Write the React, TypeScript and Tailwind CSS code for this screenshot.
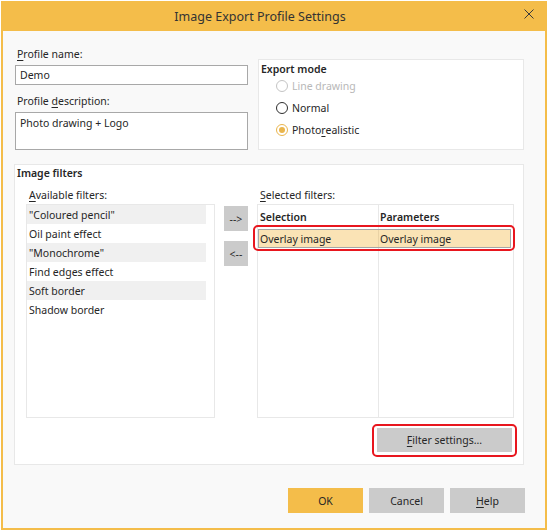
import React from "react";

const U = ({ children }: { children: React.ReactNode }) => (
  <span className="underline underline-offset-[2px] decoration-[1px]">{children}</span>
);

function Radio({ label, state }: { label: React.ReactNode; state: "disabled" | "off" | "on" }) {
  return (
    <div className="flex items-center h-[20px]">
      <div
        className={
          "w-[12px] h-[12px] rounded-full border flex items-center justify-center bg-white " +
          (state === "disabled"
            ? "border-[#c4c4c4]"
            : state === "on"
            ? "border-[#eab54c]"
            : "border-[#2e2e2e]")
        }
      >
        {state === "on" && <div className="w-[6px] h-[6px] rounded-full bg-[#eab54c]" />}
      </div>
      <span className={"ml-[4px] " + (state === "disabled" ? "text-[#b8b8b8]" : "text-[#262626]")}>{label}</span>
    </div>
  );
}

export default function App() {
  const filters = [
    '"Coloured pencil"',
    "Oil paint effect",
    '"Monochrome"',
    "Find edges effect",
    "Soft border",
    "Shadow border",
  ];
  return (
    <div
      className="w-[549px] h-[531px] bg-white pt-px pl-px text-[10.5px] leading-[14px] text-[#262626]"
      style={{ fontFamily: '"Noto Sans", "Liberation Sans", sans-serif' }}
    >
      <div className="w-[546px] h-[529px] border-2 border-[#f4bd4a] bg-[#f9f9f9] flex flex-col">
        {/* Title bar */}
        <div className="h-[28px] bg-[#f4bd4a] flex shrink-0">
          <div className="flex-1 flex items-center justify-center text-[12.5px] text-[#333]">
            Image Export Profile Settings
          </div>
          <div className="w-[28px] pl-[7px] pt-[6px]">
            <svg width="10" height="10" viewBox="0 0 10 10">
              <path d="M0.5 0.5 L9.5 9.5 M9.5 0.5 L0.5 9.5" stroke="#3a3a3a" strokeWidth="1" fill="none" />
            </svg>
          </div>
        </div>

        {/* Body */}
        <div className="flex-1 flex flex-col">
          {/* Top row */}
          <div className="flex pt-[16px] pl-[12px]">
            <div className="w-[233px] flex flex-col">
              <div className="h-[14px] pl-[2px]">
                <U>P</U>rofile name:
              </div>
              <div className="mt-[4px] h-[20px] border border-[#a8a8a8] bg-white flex items-center px-[4px]">
                Demo
              </div>
              <div className="mt-[9px] h-[14px] pl-[2px]">
                Profile <U>d</U>escription:
              </div>
              <div className="mt-[4px] h-[38px] border border-[#a8a8a8] bg-white px-[4px] pt-[3px]">
                Photo drawing + Logo
              </div>
            </div>
            <div className="ml-[10px] mt-[12px] w-[266px] h-[91px] border border-[#e8e8e8] bg-white pl-[2px] pt-[2px]">
              <div className="h-[14px] font-semibold">Export mode</div>
              <div className="ml-[15px] flex flex-col gap-[2px]">
                <Radio label="Line drawing" state="disabled" />
                <Radio label="Normal" state="off" />
                <Radio
                  label={
                    <>
                      Photo<U>r</U>ealistic
                    </>
                  }
                  state="on"
                />
              </div>
            </div>
          </div>

          {/* Image filters */}
          <div className="ml-[11px] mt-[14px] w-[510px] h-[301px] border border-[#e8e8e8] bg-white flex flex-col">
            <div className="h-[14px] pl-[2px] pt-px font-semibold">Image filters</div>
            <div className="flex mt-[9px]">
              <div className="ml-[11px] w-[189px] flex flex-col">
                <div className="h-[14px] pl-[3px]">
                  <U>A</U>vailable filters:
                </div>
                <div className="mt-[2px] h-[214px] border border-[#e8e8e8] bg-white">
                  {filters.map((f, i) => (
                    <div
                      key={f}
                      className={
                        "w-[179px] h-[19px] flex items-center pl-[2px] " + (i % 2 === 0 ? "bg-[#f0f0f0]" : "")
                      }
                    >
                      {f}
                    </div>
                  ))}
                </div>
              </div>
              <div className="ml-[9px] w-[24px] mt-[18px] flex flex-col gap-[10px]">
                <div className="h-[25px] bg-[#cbcbcb] flex items-center justify-center">--&gt;</div>
                <div className="h-[25px] bg-[#cbcbcb] flex items-center justify-center">&lt;--</div>
              </div>
              <div className="ml-[9px] w-[257px] flex flex-col">
                <div className="h-[14px] pl-[3px]">
                  <U>S</U>elected filters:
                </div>
                <div className="mt-[2px] h-[214px] border border-[#e8e8e8] bg-white flex flex-col">
                  <div className="flex h-[24px] font-semibold">
                    <div className="w-[121px] border-r border-[#e8e8e8] flex items-center pl-[2px]">Selection</div>
                    <div className="flex-1 flex items-center pl-px">Parameters</div>
                  </div>
                  <div className="relative flex h-[19px] mr-[2px] border border-[#a6a6a6] bg-[#fae3b5]">
                    <div className="w-[120px] border-r border-[#e9d2a5] flex items-center pl-px">Overlay image</div>
                    <div className="flex-1 flex items-center pl-px">Overlay image</div>
                    <div className="absolute -left-[6px] -right-[5px] -top-[5px] -bottom-[4px] border-2 border-[#e8161e] rounded-[5px] pointer-events-none" />
                  </div>
                  <div className="flex flex-1">
                    <div className="w-[121px] border-r border-[#e8e8e8]" />
                    <div className="flex-1" />
                  </div>
                </div>
              </div>
            </div>
            <div className="self-end mr-[11px] mt-[10px] relative w-[135px] h-[24px] bg-[#cbcbcb] flex items-center justify-center">
              <span>
                <U>F</U>ilter settings...
              </span>
              <div className="absolute -left-[5px] -right-[5px] -top-[4px] -bottom-[5px] border-2 border-[#e8161e] rounded-[5px] pointer-events-none" />
            </div>
          </div>

          {/* Footer */}
          <div className="flex justify-end gap-[6px] pr-[20px] mt-[23px]">
            <div className="w-[75px] h-[25px] bg-[#f4bd4a] flex items-center justify-center">OK</div>
            <div className="w-[75px] h-[25px] bg-[#cbcbcb] flex items-center justify-center">Cancel</div>
            <div className="w-[75px] h-[25px] bg-[#cbcbcb] flex items-center justify-center">
              <span>
                <U>H</U>elp
              </span>
            </div>
          </div>
        </div>
      </div>
    </div>
  );
}
